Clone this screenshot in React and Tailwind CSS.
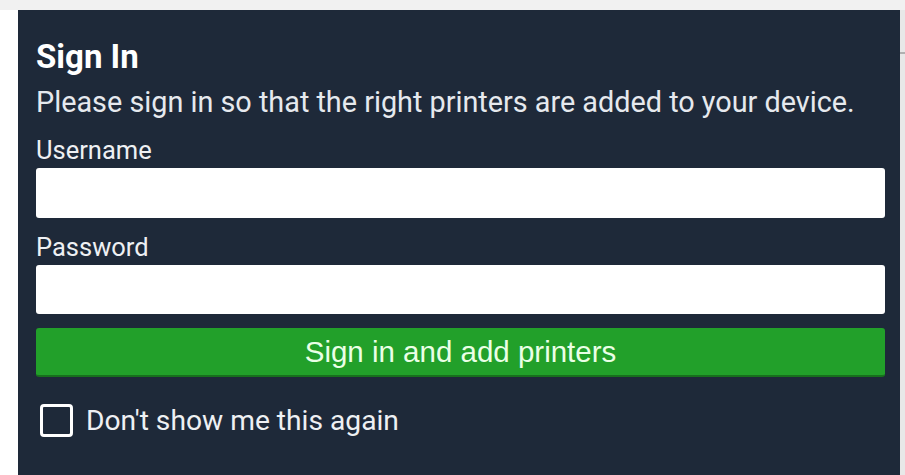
import React from 'react';

export default function App() {
  return (
    <div className="w-[905px] h-[475px] bg-white flex flex-col overflow-hidden" style={{ fontFamily: 'Roboto, "Noto Sans", sans-serif' }}>
      <div className="h-[10px] bg-[#f1f1f1] shrink-0" />
      <div className="flex flex-1">
        <div className="w-[18px] bg-white" />
        <div className="flex-1 bg-[#1e2939] pl-[18px] pr-[15px] pt-[29px] flex flex-col">
          <h1 className="text-[33px] leading-[36px] font-bold text-white tracking-[0px]">Sign In</h1>
          <p className="mt-[9px] text-[28.8px] leading-[36px] text-[#e6e9ee]">
            Please sign in so that the right printers are added to your device.
          </p>
          <label className="mt-[15px] text-[25.5px] leading-[30px] text-[#eef0f3]">Username</label>
          <input type="text" className="mt-[3px] h-[50px] w-full rounded-[3px] bg-white outline-none" />
          <label className="mt-[14px] text-[25.5px] leading-[30px] text-[#eef0f3]">Password</label>
          <input type="password" className="mt-[3px] h-[49px] w-full rounded-[3px] bg-white outline-none" />
          <button
            type="button"
            className="mt-[14px] h-[49px] w-full rounded-[3px] bg-[#22a02a] border-b-2 border-[#17701d] text-[29.5px] leading-[47px] text-[#eaffe6]"
            style={{ fontFamily: '"Liberation Sans", Arial, sans-serif' }}
          >
            Sign in and add printers
          </button>
          <div className="mt-[27px] flex items-center gap-[13px] pl-[4px]">
            <span className="w-[33px] h-[33px] rounded-[4px] border-[3px] border-white" />
            <span className="text-[28.2px] leading-[33px] text-[#eef0f3]">Don't show me this again</span>
          </div>
        </div>
        <div className="w-[5px] bg-[#e8e8e8] flex flex-col">
          <div className="h-[42px]" />
          <div className="h-[2px] bg-[#b0b0b0]" />
        </div>
      </div>
    </div>
  );
}
